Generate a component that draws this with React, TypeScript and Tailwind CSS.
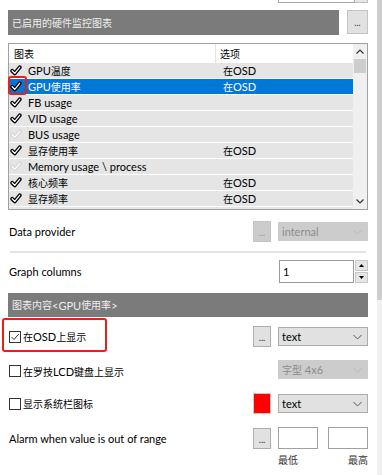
import React from "react";

const CJK = /([\u3000-\u9fff\uff00-\uffef]+)/;
function T({ s }: { s: string }) {
  const parts = s.split(CJK);
  return (
    <>
      {parts.map((p, i) =>
        i % 2 === 1 ? (
          <span key={i} className="text-[10px]">
            {p}
          </span>
        ) : (
          <React.Fragment key={i}>{p}</React.Fragment>
        )
      )}
    </>
  );
}

function ListCheck({ on }: { on: boolean }) {
  return (
    <svg width="12" height="11" viewBox="0 0 12 11" className="shrink-0">
      <path
        d="M2.2 5.8 L4.8 8.4 L9.8 2.2"
        fill="none"
        stroke={on ? "#000" : "#d6d6d6"}
        strokeWidth="3.8"
        strokeLinecap="round"
        strokeLinejoin="round"
      />
      <path
        d="M2.2 5.8 L4.8 8.4 L9.8 2.2"
        fill="none"
        stroke="#fff"
        strokeWidth="1.3"
        strokeLinecap="round"
        strokeLinejoin="round"
      />
    </svg>
  );
}

function Box({ checked }: { checked?: boolean }) {
  return (
    <div className="w-[12px] h-[12px] border border-[#333] bg-white flex items-center justify-center shrink-0">
      {checked && (
        <svg width="10" height="10" viewBox="0 0 10 10">
          <path d="M1.5 5 L4 7.5 L8.8 2" fill="none" stroke="#333" strokeWidth="1" />
        </svg>
      )}
    </div>
  );
}

function Chevron({ color }: { color: string }) {
  return (
    <svg width="9" height="6" viewBox="0 0 9 6">
      <path d="M0.5 1 L4.5 5 L8.5 1" fill="none" stroke={color} strokeWidth="1" />
    </svg>
  );
}

function Dots({ disabled }: { disabled?: boolean }) {
  return (
    <div
      className={
        disabled
          ? "w-[18px] h-[21px] bg-[#cccccc] border border-[#c4c4c4] text-[#9a9a9a] flex items-end justify-center pb-[4px] text-[9px] leading-none shrink-0"
          : "w-[18px] h-[21px] bg-[#e1e1e1] border border-[#adadad] text-[#222] flex items-end justify-center pb-[4px] text-[9px] leading-none shrink-0"
      }
    >
      ...
    </div>
  );
}

function Select({ text, disabled }: { text: string; disabled?: boolean }) {
  return (
    <div
      className={
        disabled
          ? "w-[90px] h-[19px] bg-[#cccccc] border border-[#cccccc] text-[#8c8c8c] flex items-center justify-between pl-[3px] pr-[5px] shrink-0"
          : "w-[90px] h-[19px] bg-[#e1e1e1] border border-[#adadad] text-black flex items-center justify-between pl-[3px] pr-[5px] shrink-0"
      }
    >
      <span>
        <T s={text} />
      </span>
      <Chevron color={disabled ? "#b8b8b8" : "#555"} />
    </div>
  );
}

const rows: { name: string; on: boolean; opt: string; sel?: boolean }[] = [
  { name: "GPU温度", on: true, opt: "在OSD" },
  { name: "GPU使用率", on: true, opt: "在OSD", sel: true },
  { name: "FB usage", on: true, opt: "" },
  { name: "VID usage", on: true, opt: "" },
  { name: "BUS usage", on: false, opt: "" },
  { name: "显存使用率", on: true, opt: "在OSD" },
  { name: "Memory usage \\ process", on: false, opt: "" },
  { name: "核心频率", on: true, opt: "在OSD" },
  { name: "显存频率", on: true, opt: "在OSD" },
  { name: "", on: false, opt: "" },
];

export default function App() {
  return (
    <div className="w-[382px] h-[475px] bg-white flex overflow-hidden font-['Lato','Noto_Sans_CJK_SC',sans-serif] text-[11px] text-black leading-none">
      <div className="w-[377px] flex flex-col pl-[8px] pr-[9px]">
        {/* remnant of control above */}
        <div className="flex h-[3px]">
          <div className="ml-[270px] w-[77px] h-[3px] border-b border-x border-[#a8a8a8] bg-white" />
          <div className="w-[13px] h-[3px] bg-[#e6e6e6] border-b border-r border-[#c0c0c0]" />
        </div>

        {/* header 1 */}
        <div className="mt-[7px] h-[25px] flex gap-[8px]">
          <div className="w-[331px] h-[25px] bg-[#7b7b7b] text-[#eeeeee] flex items-center pl-[4px]">
            <T s="已启用的硬件监控图表" />
          </div>
          <div className="w-[21px] h-[24px] bg-[#e1e1e1] border border-[#c4c4c4] flex items-end justify-center pb-[6px] text-[9px] text-[#333]">
            ...
          </div>
        </div>

        {/* list */}
        <div className="relative mt-[8px] h-[167px] w-[360px] border border-[#a0a0a0] flex">
          <div className="w-[344px] flex flex-col overflow-hidden">
            <div className="h-[19px] shrink-0 flex bg-white">
              <div className="w-[207px] border-r border-[#e5e5e5] pl-[5px] flex items-center">
                <T s="图表" />
              </div>
              <div className="pl-[4px] flex items-center">
                <T s="选项" />
              </div>
            </div>
            {rows.map((r, i) => (
              <div
                key={i}
                className={
                  r.sel
                    ? "h-[15px] mb-[1px] shrink-0 flex items-center bg-[#0078d7] text-white"
                    : "h-[15px] mb-[1px] shrink-0 flex items-center bg-[#e5e5e5] text-black"
                }
              >
                <div className="w-[213px] flex items-center pl-[1px]">
                  {r.name && <ListCheck on={r.on} />}
                  <span className="ml-[6px]">
                    <T s={r.name} />
                  </span>
                </div>
                <span className="pl-[1px]">
                  <T s={r.opt} />
                </span>
              </div>
            ))}
          </div>
          <div className="w-[14px] bg-[#f0f0f0] flex flex-col">
            <div className="h-[15px] flex items-center justify-center">
              <svg width="8" height="5" viewBox="0 0 8 5">
                <path d="M0.5 4.5 L4 1 L7.5 4.5" fill="none" stroke="#333" strokeWidth="1.2" />
              </svg>
            </div>
            <div className="h-[14px] mx-[1px] bg-[#cdcdcd]" />
            <div className="flex-1" />
            <div className="h-[15px] flex items-center justify-center">
              <svg width="8" height="5" viewBox="0 0 8 5">
                <path d="M0.5 0.5 L4 4 L7.5 0.5" fill="none" stroke="#333" strokeWidth="1.2" />
              </svg>
            </div>
          </div>
          <div className="absolute left-[-1px] top-[32px] w-[19px] h-[19px] border-2 border-[#e8201c] rounded-[3px]" />
        </div>

        {/* data provider */}
        <div className="mt-[11px] h-[21px] flex items-center">
          <span className="pl-[1px]">Data provider</span>
          <div className="ml-auto flex items-center gap-[7px]">
            <Dots disabled />
            <Select text="internal" disabled />
          </div>
        </div>

        <div className="mt-[9px] h-[2px] mx-[2px] bg-[#e3e3e3]" />

        {/* graph columns */}
        <div className="mt-[7px] h-[23px] flex items-center">
          <span className="pl-[1px]">Graph columns</span>
          <div className="ml-auto flex h-[23px]">
            <div className="w-[75px] h-[23px] border border-[#9a9a9a] bg-white flex items-center pl-[3px]">
              1
            </div>
            <div className="w-[13px] ml-[1px] flex flex-col gap-[1px]">
              <div className="flex-1 bg-[#e6e6e6] border border-[#c8c8c8] flex items-center justify-center">
                <svg width="5" height="3" viewBox="0 0 5 3">
                  <path d="M0 3 L2.5 0 L5 3 Z" fill="#000" />
                </svg>
              </div>
              <div className="flex-1 bg-[#e6e6e6] border border-[#c8c8c8] flex items-center justify-center">
                <svg width="5" height="3" viewBox="0 0 5 3">
                  <path d="M0 0 L2.5 3 L5 0 Z" fill="#000" />
                </svg>
              </div>
            </div>
          </div>
        </div>

        {/* header 2 */}
        <div className="mt-[10px] h-[24px] bg-[#7b7b7b] text-[#eeeeee] flex items-center pl-[4px]">
          <T s="图表内容<GPU使用率>" />
        </div>

        {/* OSD row */}
        <div className="relative mt-[9px] h-[21px] flex items-center">
          <div className="flex items-center gap-[2px] pl-[1px]">
            <Box checked />
            <span>
              <T s="在OSD上显示" />
            </span>
          </div>
          <div className="ml-auto flex items-center gap-[7px]">
            <Dots />
            <Select text="text" />
          </div>
          <div className="absolute left-[-6px] top-[-8px] w-[105px] h-[34px] border-2 border-[#e8201c] rounded-[3px]" />
        </div>

        {/* LCD row */}
        <div className="mt-[12px] h-[21px] flex items-center">
          <div className="flex items-center gap-[2px] pl-[1px] mt-[3px]">
            <Box />
            <span>
              <T s="在罗技LCD键盘上显示" />
            </span>
          </div>
          <div className="ml-auto">
            <Select text="字型 4x6" disabled />
          </div>
        </div>

        {/* systray row */}
        <div className="mt-[13px] h-[21px] flex items-center">
          <div className="flex items-center gap-[2px] pl-[1px]">
            <Box />
            <span>
              <T s="显示系统栏图标" />
            </span>
          </div>
          <div className="ml-auto flex items-center gap-[7px]">
            <div className="w-[18px] h-[21px] bg-[#ff0000] border border-[#e0c0c0]" />
            <Select text="text" />
          </div>
        </div>

        {/* alarm row */}
        <div className="mt-[13px] h-[22px] flex items-center">
          <span className="pl-[1px]">Alarm when value is out of range</span>
          <div className="ml-auto flex items-center">
            <Dots />
            <div className="ml-[7px] w-[40px] h-[22px] border border-[#a0a0a0] bg-white" />
            <div className="ml-[10px] w-[40px] h-[22px] border border-[#a0a0a0] bg-white" />
          </div>
        </div>
        <div className="mt-[6px] h-[12px] flex justify-between pl-[270px] text-[#333]">
          <T s="最低" />
          <T s="最高" />
        </div>
      </div>
      <div className="w-[5px] flex flex-col">
        <div className="h-[300px] bg-[#cdcdcd]" />
        <div className="flex-1 bg-[#f0f0f0]" />
      </div>
    </div>
  );
}
